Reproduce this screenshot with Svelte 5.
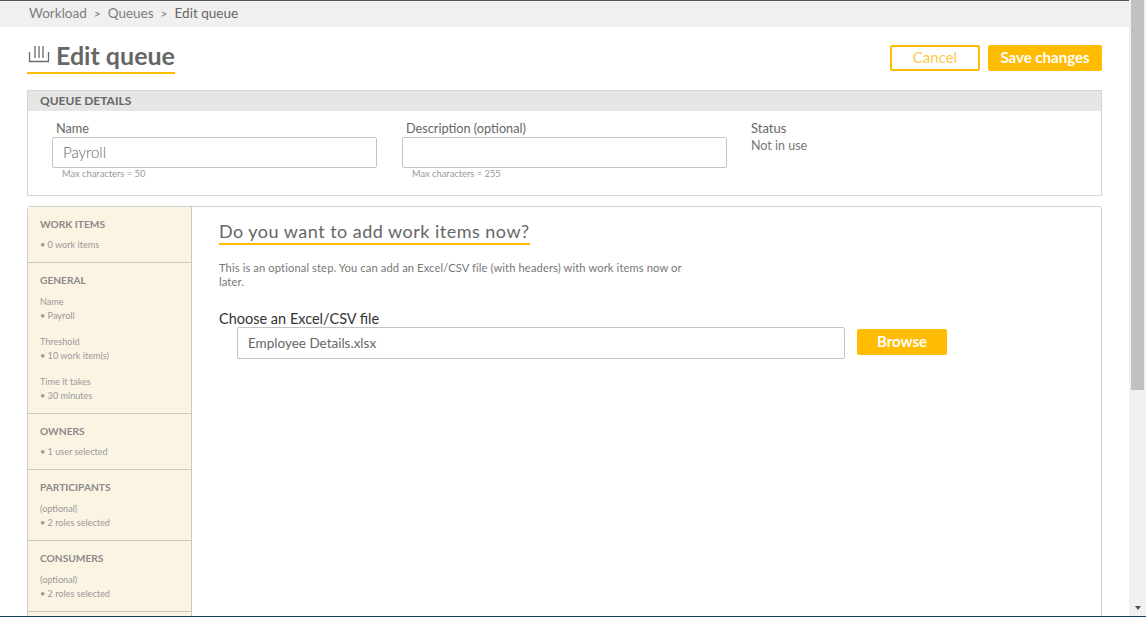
<script>
	const sections = [
		{ title: "WORK ITEMS", groups: [{ lines: ["• 0 work items"] }] },
		{
			title: "GENERAL",
			groups: [
				{ label: "Name", lines: ["• Payroll"] },
				{ label: "Threshold", lines: ["• 10 work item(s)"] },
				{ label: "Time it takes", lines: ["• 30 minutes"] }
			]
		},
		{ title: "OWNERS", groups: [{ lines: ["• 1 user selected"] }] },
		{ title: "PARTICIPANTS", groups: [{ label: "(optional)", lines: ["• 2 roles selected"] }] },
		{ title: "CONSUMERS", groups: [{ label: "(optional)", lines: ["• 2 roles selected"] }] }
	];
</script>

<div class="window">
	<div class="main">
		<nav class="crumbs">
			<span>Workload</span>
			<span class="sep">&gt;</span>
			<span>Queues</span>
			<span class="sep">&gt;</span>
			<span class="current">Edit queue</span>
		</nav>

		<header class="page-head">
			<h1>
				<svg width="24" height="20" viewBox="0 0 24 20" fill="none" stroke="#6a6a6a" stroke-width="1.3">
					<path d="M2.500 7v9.500h19V7" />
					<path d="M8 1v12M12 1v12M16 1v12" />
				</svg>
				Edit queue
			</h1>
			<div class="actions">
				<button class="btn ghost">Cancel</button>
				<button class="btn solid">Save changes</button>
			</div>
		</header>

		<section class="details">
			<h2>QUEUE DETAILS</h2>
			<div class="fields">
				<div class="field">
					<span class="label">Name</span>
					<input class="input" value="Payroll" />
					<small>Max characters = 50</small>
				</div>
				<div class="field">
					<span class="label">Description (optional)</span>
					<input class="input" value="" />
					<small>Max characters = 255</small>
				</div>
				<div class="status">
					<span class="status-label">Status</span>
					<span class="status-value">Not in use</span>
				</div>
			</div>
		</section>

		<section class="card">
			<aside class="summary">
				{#each sections as section}
					<div class="block">
						<h3>{section.title}</h3>
						{#each section.groups as group}
							<div class="group" class:labelled={group.label}>
								{#if group.label}<div class="row">{group.label}</div>{/if}
								{#each group.lines as line}
									<div class="row">{line}</div>
								{/each}
							</div>
						{/each}
					</div>
				{/each}
			</aside>

			<div class="content">
				<h2 class="question">Do you want to add work items now?</h2>
				<p class="hint">This is an optional step. You can add an Excel/CSV file (with headers) with work items now or later.</p>
				<div class="file-label">Choose an Excel/CSV file</div>
				<div class="file-row">
					<input class="input file" value="Employee Details.xlsx" />
					<button class="btn solid browse">Browse</button>
				</div>
			</div>
		</section>
	</div>

	<div class="scrollbar">
		<div class="thumb"></div>
		<div class="arrow"></div>
	</div>
</div>

<style>
	:global(body) {
		overflow: hidden;
	}

	.window {
		display: flex;
		height: 616px;
		border-bottom: 1px solid #17405f;
		overflow: hidden;
		font-family: Lato, "Open Sans", sans-serif;
		color: #666;
		background: #fff;
	}

	.main {
		flex: 1;
		min-width: 0;
	}

	.crumbs {
		display: flex;
		align-items: center;
		gap: 7px;
		height: 24px;
		padding: 0 0 2px 29px;
		border-top: 1px solid #555;
		background: #f0f0f0;
		font-size: 13.500px;
		color: #7d7d7d;
	}

	.crumbs .sep {
		font-size: 12px;
	}

	.crumbs .current {
		color: #666;
	}

	.page-head {
		display: flex;
		justify-content: space-between;
		align-items: flex-start;
		padding: 18px 27px 16px;
	}

	h1 {
		display: flex;
		align-items: center;
		gap: 5px;
		height: 20px;
		margin: 0;
		padding: 0 0 7px;
		border-bottom: 2px solid #ffbc00;
		font-size: 25px;
		line-height: 20px;
		font-weight: 700;
		color: #666;
	}

	.actions {
		display: flex;
		gap: 8px;
	}

	.btn {
		height: 26px;
		border-radius: 2px;
		font-family: inherit;
		font-size: 15px;
		padding: 0 0 2px;
	}

	.ghost {
		width: 90px;
		border: 2px solid #ffbc00;
		background: #fff;
		color: #ffc84a;
	}

	.solid {
		width: 114px;
		border: none;
		background: #ffbc00;
		color: #fff;
		font-weight: 700;
	}

	.details {
		height: 106px;
		box-sizing: border-box;
		margin: 0 27px 10px;
		border: 1px solid #d6d6d6;
	}

	.details h2 {
		margin: 0;
		height: 20px;
		padding-left: 12px;
		background: #e6e6e6;
		font-size: 12px;
		line-height: 20px;
		font-weight: 700;
		color: #666;
	}

	.fields {
		display: flex;
		padding: 10px 0 0 24px;
		gap: 25px;
	}

	.field {
		display: flex;
		flex-direction: column;
		width: 325px;
	}

	.label {
		padding-left: 4px;
		margin-bottom: 2px;
		font-size: 12.700px;
		line-height: 14px;
	}

	.input {
		box-sizing: border-box;
		height: 31px;
		border: 1px solid #c4c4c4;
		border-radius: 2px;
		padding: 0 10px 2px;
		font-family: inherit;
		font-size: 15px;
		font-weight: 300;
		color: #666;
		background: #fff;
		outline: none;
	}

	small {
		padding: 0 0 0 10px;
		font-size: 9.300px;
		line-height: 11px;
		color: #999;
	}

	.status {
		display: flex;
		flex-direction: column;
		margin: -1px 0 0 -1px;
		font-size: 13px;
		line-height: 17px;
	}

	.status-value {
		font-size: 12.500px;
		color: #777;
	}

	.card {
		display: flex;
		height: 440px;
		margin: 0 27px;
		border: 1px solid #d0d0d0;
		border-radius: 3px;
	}

	.summary {
		width: 163px;
		flex: none;
		background: #fcf4e3;
		border-right: 1px solid #c8c8c8;
	}

	.block {
		padding: 10px 12px;
		border-bottom: 1px solid #cbc8c0;
	}

	.block h3 {
		margin: 0;
		font-size: 10.200px;
		line-height: 14px;
		font-weight: 700;
		color: #8a8a8a;
	}

	.group {
		margin-top: 7px;
		margin-bottom: 12px;
	}

	.group:last-child {
		margin-bottom: 0;
	}

	.group.labelled:first-of-type {
		margin-top: 8px;
	}

	.row {
		font-size: 9.100px;
		line-height: 14px;
		color: #999;
	}

	.content {
		flex: 1;
		padding: 14px 27px;
	}

	.question {
		display: inline-block;
		margin: 0;
		padding-bottom: 1px;
		border-bottom: 2px solid #ffbc00;
		font-size: 18px;
		line-height: 21px;
		font-weight: 400;
		letter-spacing: 0.48px;
		color: #666;
	}

	.hint {
		width: 480px;
		margin: 16px 0 0;
		font-size: 11.200px;
		line-height: 14px;
		letter-spacing: 0.1px;
		color: #777;
	}

	.file-label {
		margin-top: 21px;
		font-size: 14.500px;
		line-height: 17px;
		color: #333;
	}

	.file-row {
		display: flex;
		align-items: flex-start;
		gap: 12px;
		margin-left: 18px;
	}

	.file {
		width: 608px;
		height: 32px;
		padding-bottom: 0;
		font-size: 13.500px;
		font-weight: 400;
	}

	.browse {
		width: 90px;
		margin-top: 2px;
	}

	.scrollbar {
		display: flex;
		flex-direction: column;
		justify-content: space-between;
		align-items: center;
		flex: none;
		width: 17px;
		background: #f1f1f1;
	}

	.thumb {
		width: 13px;
		height: 390px;
		background: #c1c1c1;
	}

	.arrow {
		width: 0;
		height: 0;
		margin-bottom: 6px;
		border: 3.500px solid transparent;
		border-bottom: none;
		border-top: 4px solid #505050;
	}
</style>
